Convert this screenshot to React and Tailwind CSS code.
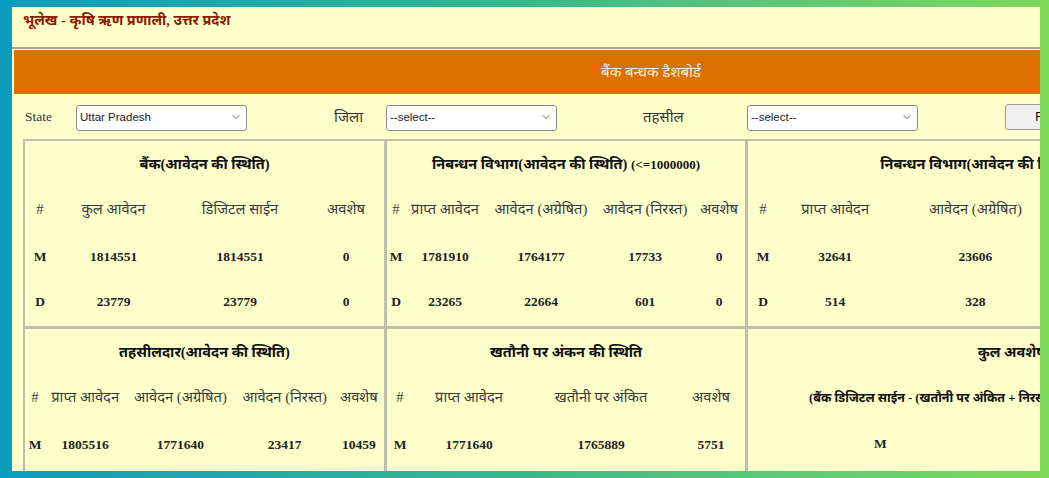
import React from 'react';
import { ChevronDown } from 'lucide-react';

const serif = "font-['Liberation_Serif','Noto_Sans_Devanagari','Noto_Sans',serif]";

const StatCard = ({ title, heads, rows, colClasses }) => (
    <div className="h-[189px] border-2 border-[#bfbfb0] -ml-px -mt-px overflow-hidden">
        <h2 className="h-[46px] pt-[12px] text-center text-[14.5px] leading-[22px] font-bold text-[#111] whitespace-nowrap">{title}</h2>
        <table className="w-full table-fixed border-collapse">
            <thead>
                <tr className="h-[48px]">
                    {heads.map((h, i) => (
                        <th key={i} className={`${colClasses[i]} pb-[3px] font-normal text-[14.7px] text-[#3a3a3a] text-center whitespace-nowrap`}>{h}</th>
                    ))}
                </tr>
            </thead>
            <tbody>
                {rows.map((row, r) => (
                    <tr key={r} className="h-[45px]">
                        {row.map((cell, i) => (
                            <td key={i} className="font-bold text-[13.5px] text-[#222] text-center whitespace-nowrap">{cell}</td>
                        ))}
                    </tr>
                ))}
            </tbody>
        </table>
    </div>
);

const Select = ({ value }) => (
    <div className="relative w-[171px] h-[26px] shrink-0">
        <select defaultValue={value} className="appearance-none w-full h-full bg-white border border-[#8a8a8a] rounded-[3px] pl-[3px] text-[11.5px] font-['Liberation_Sans',sans-serif] text-[#222]">
            <option>{value}</option>
        </select>
        <ChevronDown size={12} strokeWidth={1.5} className="absolute right-[5px] top-[7px] text-[#333] pointer-events-none" />
    </div>
);

export default function App() {
    return (
        <div className={`w-[1049px] h-[478px] overflow-hidden pl-[12px] pr-[9px] pt-[7px] pb-[7px] bg-gradient-to-r from-[#0a9bbf] via-[#37b88a] to-[#7ed957] ${serif}`}>
            <div className="h-[464px] bg-[#ffffcc] overflow-hidden">
                <div className="h-[42px] border-t border-white border-b-2 border-b-[#a5a59a] pl-[11px] pt-[1px]">
                    <h1 className="text-[14.4px] leading-[22px] font-bold text-[#8a1c00]">भूलेख - कृषि ऋण प्रणाली, उत्तर प्रदेश</h1>
                </div>
                <div className="ml-[2px] h-[44px] mt-[1px] bg-[#de7000] flex items-center justify-center pl-[248px] text-[15px] text-[#fbeedd]">
                    बैंक बन्धक डैशबोर्ड
                </div>
                <div className="h-[46px] flex items-center pl-[13px] whitespace-nowrap">
                    <span className="w-[51px] shrink-0 text-[13.5px] text-[#333]">State</span>
                    <Select value="Uttar Pradesh" />
                    <span className="w-[139px] shrink-0 pl-[87px] text-[15px] text-[#333]">जिला</span>
                    <Select value="--select--" />
                    <span className="w-[190px] shrink-0 pl-[86px] text-[15px] text-[#333]">तहसील</span>
                    <Select value="--select--" />
                    <button className="ml-[87px] w-[84px] h-[26px] shrink-0 bg-[#efefef] border border-[#9a9a9a] rounded-[3px] text-[12px] font-['Liberation_Sans',sans-serif] text-black">Find</button>
                </div>
                <div className="ml-[12px] grid grid-cols-[362px_361px_540px] w-[1263px]">
                    <StatCard
                        title="बैंक(आवेदन की स्थिति)"
                        heads={['#', 'कुल आवेदन', 'डिजिटल साईन', 'अवशेष']}
                        colClasses={['w-[30px]', 'w-[117px]', 'w-[136px]', 'w-[76px]']}
                        rows={[['M', '1814551', '1814551', '0'], ['D', '23779', '23779', '0']]}
                    />
                    <StatCard
                        title={<>निबन्धन विभाग(आवेदन की स्थिति) <span className="text-[13px]">(&lt;=1000000)</span></>}
                        heads={['#', 'प्राप्त आवेदन', 'आवेदन (अग्रेषित)', 'आवेदन (निरस्त)', 'अवशेष']}
                        colClasses={['w-[18px]', 'w-[80px]', 'w-[112px]', 'w-[96px]', 'w-[52px]']}
                        rows={[['M', '1781910', '1764177', '17733', '0'], ['D', '23265', '22664', '601', '0']]}
                    />
                    <StatCard
                        title={<>निबन्धन विभाग(आवेदन की स्थिति) <span className="text-[13px] mr-[12px]">(&gt;1000000)</span></>}
                        heads={['#', 'प्राप्त आवेदन', 'आवेदन (अग्रेषित)', 'आवेदन (निरस्त)', 'अवशेष']}
                        colClasses={['w-[30px]', 'w-[114px]', 'w-[166px]', 'w-[140px]', 'w-[86px]']}
                        rows={[['M', '32641', '23606', '9035', '0'], ['D', '514', '328', '186', '0']]}
                    />
                    <StatCard
                        title="तहसीलदार(आवेदन की स्थिति)"
                        heads={['#', 'प्राप्त आवेदन', 'आवेदन (अग्रेषित)', 'आवेदन (निरस्त)', 'अवशेष']}
                        colClasses={['w-[20px]', 'w-[80px]', 'w-[110px]', 'w-[98px]', 'w-[50px]']}
                        rows={[['M', '1805516', '1771640', '23417', '10459']]}
                    />
                    <StatCard
                        title="खतौनी पर अंकन की स्थिति"
                        heads={['#', 'प्राप्त आवेदन', 'खतौनी पर अंकित', 'अवशेष']}
                        colClasses={['w-[26px]', 'w-[112px]', 'w-[152px]', 'w-[68px]']}
                        rows={[['M', '1771640', '1765889', '5751']]}
                    />
                    <div className="h-[189px] border-2 border-[#bfbfb0] -ml-px -mt-px overflow-hidden">
                        <h2 className="h-[46px] pt-[12px] pr-[10px] text-center text-[14.5px] leading-[22px] font-bold text-[#111] whitespace-nowrap">कुल अवशेष</h2>
                        <p className="h-[46px] flex items-center pl-[61px] text-[12.5px] font-bold text-[#111] whitespace-nowrap">(बैंक डिजिटल साईन - (खतौनी पर अंकित + निरस्त))</p>
                        <div className="h-[46px] grid grid-cols-2 items-center text-center text-[13.5px] font-bold text-[#222]">
                            <span className="pr-[4px]">M</span>
                            <span>19</span>
                        </div>
                    </div>
                </div>
            </div>
        </div>
    );
}
